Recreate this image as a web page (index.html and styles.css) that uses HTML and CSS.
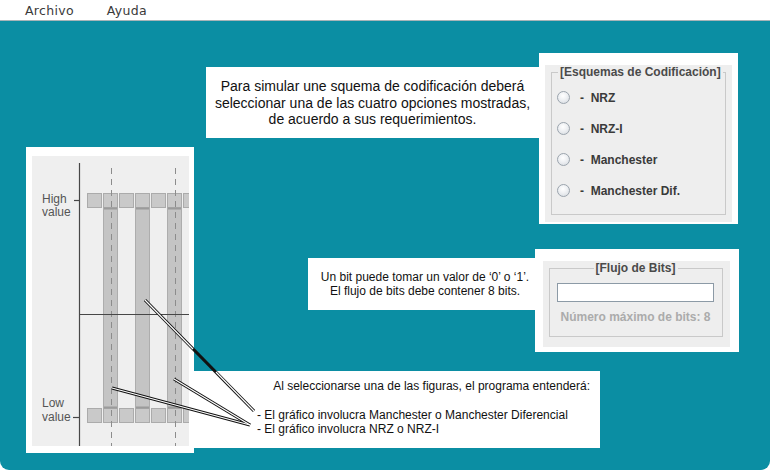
FILE: index.html
```html
<!DOCTYPE html>
<html lang="es">
<head>
<meta charset="utf-8">
<title>Esquemas de Codificación</title>
<link rel="stylesheet" href="styles.css">
</head>
<body>
<div class="menubar">
  <span class="menu-item">Archivo</span>
  <span class="menu-item">Ayuda</span>
</div>
<main class="desk">
  <section class="left-col">
    <div class="chart-panel">
      <div class="chart-inner">
        <svg class="chart" width="157" height="290" viewBox="0 0 157 290">
          <g class="bars">
            <rect x="71.5" y="51.5" width="14" height="200"/>
            <rect x="103.5" y="51.5" width="14" height="200"/>
            <rect x="135.5" y="51.5" width="14" height="200"/>
          </g>
          <g class="squares">
            <rect x="55.5" y="37.5" width="14" height="14"/>
            <rect x="71.5" y="37.5" width="14" height="14"/>
            <rect x="87.5" y="37.5" width="14" height="14"/>
            <rect x="103.5" y="37.5" width="14" height="14"/>
            <rect x="119.5" y="37.5" width="14" height="14"/>
            <rect x="135.5" y="37.5" width="14" height="14"/>
            <rect x="151.5" y="37.5" width="14" height="14"/>
            <rect x="55.5" y="252.5" width="14" height="14"/>
            <rect x="71.5" y="252.5" width="14" height="14"/>
            <rect x="87.5" y="252.5" width="14" height="14"/>
            <rect x="103.5" y="252.5" width="14" height="14"/>
            <rect x="119.5" y="252.5" width="14" height="14"/>
            <rect x="135.5" y="252.5" width="14" height="14"/>
            <rect x="151.5" y="252.5" width="14" height="14"/>
          </g>
          <g class="edges">
            <line x1="72" y1="52.5" x2="85" y2="52.5"/>
            <line x1="104" y1="52.5" x2="117" y2="52.5"/>
            <line x1="136" y1="52.5" x2="149" y2="52.5"/>
            <line x1="72" y1="251.5" x2="85" y2="251.5"/>
            <line x1="104" y1="251.5" x2="117" y2="251.5"/>
            <line x1="136" y1="251.5" x2="149" y2="251.5"/>
          </g>
          <g class="dashes">
            <line x1="79.5" y1="12" x2="79.5" y2="290"/>
            <line x1="143.5" y1="12" x2="143.5" y2="290"/>
          </g>
          <g class="axis">
            <line x1="47.5" y1="7" x2="47.5" y2="290"/>
            <line x1="47" y1="158.5" x2="157" y2="158.5"/>
            <line x1="42" y1="44.5" x2="47" y2="44.5"/>
            <line x1="41" y1="261.5" x2="47" y2="261.5"/>
          </g>
          <g class="labels">
            <text x="10" y="47">High</text>
            <text x="10" y="60">value</text>
            <text x="10" y="251">Low</text>
            <text x="10" y="265">value</text>
          </g>
        </svg>
      </div>
    </div>
  </section>
  <section class="right-col">
    <div class="row row-a">
      <div class="note note-scheme">
        Para simular une squema de codificación deberá<br>
        seleccionar una de las cuatro opciones mostradas,<br>
        de acuerdo a sus requerimientos.
      </div>
      <div class="panel panel-radios">
        <div class="panel-inner">
          <fieldset class="group group-radios">
            <legend>[Esquemas de Codificación]</legend>
            <label class="radio-row"><span class="radio"></span><span>-&nbsp; NRZ</span></label>
            <label class="radio-row"><span class="radio"></span><span>-&nbsp; NRZ-I</span></label>
            <label class="radio-row"><span class="radio"></span><span>-&nbsp; Manchester</span></label>
            <label class="radio-row"><span class="radio"></span><span>-&nbsp; Manchester Dif.</span></label>
          </fieldset>
        </div>
      </div>
    </div>
    <div class="row row-b">
      <div class="note note-bits">
        Un bit puede tomar un valor de ‘0’ o ‘1’.<br>
        El flujo de bits debe contener 8 bits.
      </div>
      <div class="panel panel-bits">
        <div class="panel-inner">
          <fieldset class="group group-bits">
            <legend>[Flujo de Bits]</legend>
            <div class="bits-input"></div>
            <div class="bits-hint">Número máximo de bits: 8</div>
          </fieldset>
        </div>
      </div>
    </div>
    <div class="row row-c">
      <div class="note note-figures">
        <p class="figures-title">Al seleccionarse una de las figuras, el programa entenderá:</p>
        <p class="figures-item">- El gráfico involucra Manchester o Manchester Diferencial</p>
        <p class="figures-item">- El gráfico involucra NRZ o NRZ-I</p>
      </div>
    </div>
  </section>
  <svg class="pointers" width="770" height="449" viewBox="0 0 770 449">
    <g class="ptr-outline">
      <line x1="145" y1="279" x2="254" y2="390"/>
      <line x1="112" y1="367" x2="250" y2="404"/>
      <line x1="174" y1="358" x2="250" y2="404"/>
    </g>
    <g class="ptr-fill">
      <line x1="145" y1="279" x2="193" y2="328"/>
      <line x1="216" y1="351" x2="254" y2="390"/>
      <line x1="112" y1="367" x2="250" y2="404"/>
      <line x1="174" y1="358" x2="250" y2="404"/>
    </g>
  </svg>
</main>
</body>
</html>
```
FILE: styles.css
```css
* { box-sizing: border-box; }

html, body {
  margin: 0;
  padding: 0;
  background: #ffffff;
}

body {
  width: 770px;
  height: 470px;
  overflow: hidden;
  font-family: "Liberation Sans", Arial, sans-serif;
  color: #111;
}

.menubar {
  height: 21px;
  background: #ffffff;
  border-bottom: 1px solid #a8b4b8;
  display: flex;
  align-items: center;
  padding-left: 25px;
  gap: 33px;
}

.menu-item {
  font-family: "DejaVu Sans", sans-serif;
  font-size: 12.5px;
  color: #3a3a3a;
  letter-spacing: 0.3px;
}

.desk {
  position: relative;
  height: 449px;
  background: #0b8ea3;
  border-radius: 0 0 9px 9px;
  display: flex;
  padding-left: 26px;
}

.left-col {
  width: 168px;
  padding-top: 126px;
}

.chart-panel {
  width: 168px;
  height: 306px;
  background: #ffffff;
  padding: 9px 5px 7px 6px;
}

.chart-inner {
  width: 157px;
  height: 290px;
  background: #efefef;
  overflow: hidden;
}

.chart { display: block; }

.chart .bars rect { fill: #c4c4c4; stroke: #adadad; stroke-width: 1; }
.chart .squares rect { fill: #c9c9c9; stroke: #ababab; stroke-width: 1; }
.chart .edges line { stroke: #9b9b9b; stroke-width: 2; }
.chart .dashes line { stroke: #8c8c8c; stroke-width: 1; stroke-dasharray: 6 5; }
.chart .axis line { stroke: #474747; stroke-width: 1.2; }
.chart .labels text {
  font-family: "Liberation Sans", Arial, sans-serif;
  font-size: 12px;
  fill: #555;
}

.right-col {
  width: 545px;
  padding-top: 32px;
  display: flex;
  flex-direction: column;
}

.row {
  display: flex;
  justify-content: flex-end;
  align-items: flex-start;
}

.row-a { padding-right: 1px; }
.row-b { margin-top: 25px; }
.row-c { margin-top: 19px; justify-content: flex-start; }

.note {
  background: #ffffff;
  color: #111;
}

.note-scheme {
  width: 333px;
  height: 71px;
  margin-top: 14px;
  padding-top: 11px;
  font-size: 14px;
  line-height: 16.5px;
  text-align: center;
}

.note-bits {
  width: 227px;
  height: 52px;
  margin-top: 9px;
  padding: 12px 0 0 7px;
  font-size: 12px;
  line-height: 14px;
  text-align: center;
}

.note-figures {
  width: 406px;
  height: 77px;
  padding-top: 8px;
  font-size: 12px;
  line-height: 14.5px;
}

.note-figures p { margin: 0; }

.figures-title {
  text-align: right;
  padding-right: 10px;
  margin-bottom: 14px !important;
}

.figures-item { padding-left: 63px; }

.panel {
  background: #ffffff;
}

.panel-radios {
  width: 199px;
  height: 171px;
  padding: 7px 6px;
}

.panel-bits {
  width: 204px;
  height: 103px;
  padding: 8px 9px 9px 8px;
}

.panel-inner {
  height: 100%;
  background: #eeeeee;
  padding: 0 6px;
}

.group {
  margin: 0;
  border: 1px solid #c9c9c9;
  min-width: 0;
}

.group legend {
  font-size: 12px;
  line-height: 14px;
  font-weight: bold;
  color: #4a4a4a;
  padding: 0 2px;
  white-space: nowrap;
}

.group-radios {
  margin-top: 5px;
  height: 150px;
  padding: 3px 0 0 5px;
}

.group-radios legend { margin-left: 1px; }

.radio-row {
  display: flex;
  align-items: center;
  height: 31px;
  gap: 10px;
  font-size: 12px;
  font-weight: bold;
  color: #3a3a3a;
}

.radio {
  width: 13px;
  height: 13px;
  border-radius: 50%;
  border: 1px solid #9ba4ad;
  background: radial-gradient(circle at 45% 35%, #ffffff 0%, #eef0f3 45%, #d3d8dd 100%);
}

.group-bits {
  margin-top: 4px;
  height: 76px;
  margin-right: 1px;
  padding: 0 8px 0 7px;
}

.group-bits legend {
  margin: 0 auto;
}

.bits-input {
  margin-top: 8px;
  height: 19px;
  background: #ffffff;
  border: 1px solid #8c9aa6;
}

.bits-hint {
  margin-top: 8px;
  font-size: 12px;
  line-height: 14px;
  font-weight: bold;
  color: #ababab;
  text-align: center;
}

.pointers {
  position: absolute;
  left: 0;
  top: 0;
  pointer-events: none;
}

.ptr-outline line { stroke: #111; stroke-width: 3.2; }
.ptr-fill line { stroke: #ffffff; stroke-width: 1.2; }
```
